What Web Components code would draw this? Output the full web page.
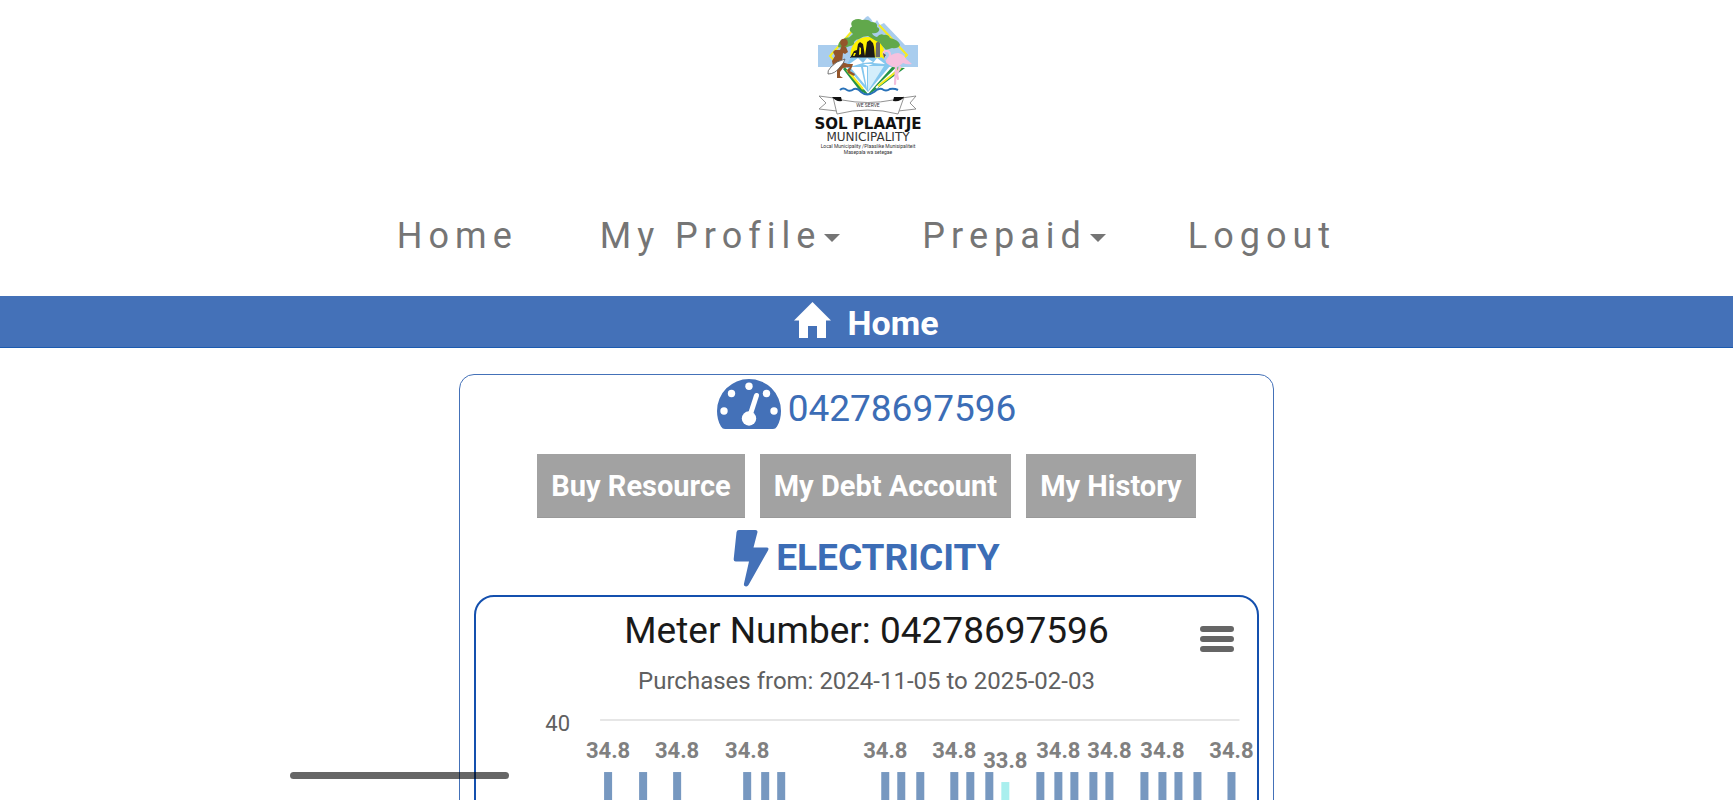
<!DOCTYPE html>
<html lang="en">
<head>
<meta charset="utf-8">
<title>Sol Plaatje Municipality - Home</title>
<style>
  html, body { margin: 0; }
  body { font-family: Roboto, "Liberation Sans", sans-serif; color: #212121; background: #fff; --brand: #4471b8; --brand-dark: #1450ae; }
</style>
</head>
<body>
<portal-page>
  <town-logo slot="logo"></town-logo>
  <site-nav slot="nav">
    <nav-item>Home</nav-item>
    <nav-item menu>My Profile</nav-item>
    <nav-item menu>Prepaid</nav-item>
    <nav-item>Logout</nav-item>
  </site-nav>
  <page-banner slot="banner">Home</page-banner>
  <meter-card number="04278697596">
    <action-button slot="actions">Buy Resource</action-button>
    <action-button slot="actions">My Debt Account</action-button>
    <action-button slot="actions">My History</action-button>
    <usage-chart>
      <span slot="title">Meter Number: 04278697596</span>
      <span slot="subtitle">Purchases from: 2024-11-05 to 2025-02-03</span>
    </usage-chart>
  </meter-card>
</portal-page>
<script>
const define = (name, html, setup) => customElements.define(name, class extends HTMLElement {
  constructor() {
    super();
    this.attachShadow({ mode: 'open' }).innerHTML = html;
  }
  connectedCallback() { if (setup) setup(this, this.shadowRoot); }
});

define('portal-page', `
  <style>
    :host { display: flex; flex-direction: column; height: 100vh; overflow: hidden; }
    header { display: flex; justify-content: center; padding: 10px 0 0; }
    main { flex: 1; min-height: 0; overflow: hidden; padding-top: 26px; }
    .thumb { position: fixed; left: 290px; bottom: 21px; width: 219px; height: 7px; border-radius: 4px; background: rgba(0,0,0,.6); }
  </style>
  <header><slot name="logo"></slot></header>
  <slot name="nav"></slot>
  <slot name="banner"></slot>
  <main><slot></slot></main>
  <div class="thumb"></div>`);

define('town-logo', `
  <style>
    :host { display: block; }
    svg { display: block; width: 134px; height: 150px; }
    text { font-family: Roboto, sans-serif; fill: #333; text-anchor: middle; }
    .name { font-family: "DejaVu Sans", sans-serif; font-weight: bold; fill: #111; }
    .kind { font-family: "DejaVu Sans", sans-serif; }
  </style>
  <svg viewBox="0 0 134 150" role="img" aria-label="Sol Plaatje Municipality">
    <path fill="#a9cdee" d="M18 35H39L66 7 68 6 71 9 74 14 77 10 80 15 84 13 105 35H118V57H18z"/>
    <path fill="none" stroke="#f8ec1c" stroke-width="2" d="M53 20 30 46 41 58M79 15 107 45 92 60"/>
    <circle cx="67.500" cy="44" r="17" fill="#fff200"/>
    <path fill="#61a84b" d="M38 37Q38 31 43 29.500 45 27 49 27.500L53 24 50 21Q49 18 52 16.500 50 13 53 10.500 58 8 62 10 69 9 71 12 78 12 77 17 81 19 78 22 75 24 72 23 73 26 77 27 80 23 84 25 88 24 90 28 99 30 100 35 98 39 92 38L86 40Q82 36 80 33 74 30 68 26 63 26 59 29 56 29 54 32 55 35 50 36 44 39 38 37z"/>
    <path fill="#1b1b16" d="M50 48 54 41 57 40 58 34 60 32 63 34 64 40 65 46 67 32 70 30 73 33 74 37 75 48z"/>
    <path fill="#fff200" d="M59.500 37 61 38 61 44 59 45zM54 43 56 43 54.500 46 53 46z"/>
    <path fill="#696969" d="M76 33 78 31.500 80 33V47H75.500z"/>
    <path fill="#259447" d="M45 57 68 84 92 57 105 58 74 81 68 85 60 81 43 59z"/>
    <path fill="none" stroke="#fff" stroke-width="2" d="M50 59 64 79M97 58 76 78"/>
    <path fill="none" stroke="#f8ec1c" stroke-width="2" d="M47 60 63 79M101 58 78 76"/>
    <path fill="#84c7ee" d="M51 47.500H82L90 56 68 82 46 56z"/>
    <path fill="#fff" d="M58 48 63 53 53 56 48 55zM67 48 73 52 63 53zM77 48 85 54 73 53zM50 57 61 57 65 75zM63 54 73 54 68 56z"/>
    <path fill="#d4eefb" d="M68 56H84L68 81z"/><path fill="#fff" d="M63 57 67 57 67 79z"/>
    <circle cx="44" cy="32.500" r="3.800" fill="#93552b"/>
    <path fill="#93552b" d="M42 35 46 37 48 42 45 44 43 43 42 52 48 54 53 54 52 57 50 61 55 64 54 66 48 63 47 60 50 57 43 58 40 62 40 66 43 68 37 68 37 60 33 56 32 51 35 46 33 42 35 40 40 40z"/>
    <path fill="#fff" stroke="#555" stroke-width=".8" d="M45 49Q36 51 31 57 27 61 28 64 35 64 40 57 44 53 45 49z"/>
    <path fill="none" stroke="#f3bfdc" stroke-width="2.200" stroke-linecap="round" d="M85 46Q82 43 85 41 89 40 90 44 91 47 88 49 85 52 90 54M96 57 95 74M100 57 97 64 98 69"/>
    <path fill="#f5c1de" d="M87 50Q91 43 98 43 104 44 106 49L112 54Q107 55 103 53 98 58 93 57 88 55 87 50z"/>
    <path fill="#555" d="M83 43 84 48 86 45z"/>
    <path fill="none" stroke="#2871b8" stroke-width="2" d="M40 80Q43 77 47 80 50 82 54 79 58 78 61 82 67 87 74 82 78 78 82 79 86 82 90 79 94 78 98 80"/>
    <path fill="#fff" stroke="#777" stroke-width=".8" d="M34 88 19 86 26 93 19 99 37 101V97M102 88 116 86 110 93 116 99 98 101V97"/>
    <path fill="#fff" stroke="#777" stroke-width=".8" d="M33 87Q36 91 42 90 68 95 93 90 99 91 104 87L98 104Q68 96 37 104z"/>
    <path fill="#111" d="M32 87 41 87 42 91Q36 92 32 87zM94 87 104 87Q101 92 93 91z"/>
    <text x="68" y="97" font-size="5">WE SERVE</text>
    <text x="68" y="119" font-size="15" class="name">SOL PLAATJE</text>
    <text x="68" y="131" font-size="12" class="kind">MUNICIPALITY</text>
    <text x="68" y="138" font-size="5">Local Municipality /Plaaslike Munisipaliteit</text>
    <text x="68" y="144" font-size="5">Masepala wa setegae</text>
  </svg>`);

define('site-nav', `
  <style>
    :host { display: block; }
    nav { display: flex; justify-content: center; align-items: center; gap: 82px; height: 136px; box-sizing: border-box; padding-top: 16px; }
  </style>
  <nav><slot></slot></nav>`);

define('nav-item', `
  <style>
    :host { display: block; }
    a, button { display: flex; align-items: center; gap: 3px; font: 36px/48px Roboto, sans-serif; letter-spacing: 6px; color: #757575; text-decoration: none; background: none; border: 0; padding: 0; white-space: nowrap; cursor: pointer; }
    i { width: 0; height: 0; border: 8px solid transparent; border-top-color: #757575; border-bottom: 0; margin-top: 4px; }
  </style>`, (el, root) => {
  if (root.querySelector('slot')) return;
  root.innerHTML += el.hasAttribute('menu')
    ? '<button type="button" aria-haspopup="true"><slot></slot><i></i></button>'
    : '<a href="#"><slot></slot></a>';
});

define('page-banner', `
  <style>
    :host { display: block; }
    h1 { margin: 0; display: flex; justify-content: center; align-items: center; gap: 16px; height: 51px; font: bold 34px/50px Roboto, sans-serif; color: #fff; background: var(--brand); border-bottom: 1px solid #1c5bb0; }
    svg { width: 37px; height: 36px; margin-bottom: 4px; }
    span { padding-top: 2px; }
  </style>
  <h1><svg viewBox="0 0 37 36" aria-hidden="true"><path fill="#fff" d="M18.500 0 37 18.500H32V36H23V24H14V36H5V18.500H0z"/></svg><span><slot></slot></span></h1>`);

define('meter-card', `
  <style>
    :host { display: block; box-sizing: border-box; width: 47%; margin: 0 auto; border: 1px solid #4471b8; border-radius: 15px; padding: 4px 14px 14px; }
    h2, h3 { margin: 0; display: flex; justify-content: center; align-items: center; color: #3c6db6; }
    h2 { gap: 7px; height: 50px; font: 37px/50px Roboto, sans-serif; }
    h2 span { padding-top: 10px; }
    h2 svg { width: 64px; height: 50px; }
    .actions { display: flex; justify-content: center; gap: 15px; padding: 25px 0 11px; }
    h3 { gap: 7px; height: 58px; font: bold 37px/58px Roboto, sans-serif; margin-bottom: 8px; }
    h3 svg { width: 36px; height: 58px; }
  </style>
  <h2>
    <svg viewBox="0 0 64 50" aria-hidden="true">
      <path fill="#4471b8" d="M32 0A32 32 0 0 0 0 32Q0 41 4 47.500 5.500 50 8 50H56Q58.500 50 60 47.500 64 41 64 32A32 32 0 0 0 32 0z"/>
      <g fill="#fff"><circle cx="7" cy="32" r="3.700"/><circle cx="14.500" cy="14.500" r="3.700"/><circle cx="32" cy="7.200" r="3.700"/><circle cx="49.500" cy="14.500" r="3.700"/><circle cx="57" cy="32" r="3.700"/><circle cx="32" cy="39.500" r="7.200"/></g>
      <path stroke="#fff" stroke-width="5" stroke-linecap="round" d="M32.500 38 39.500 16.500"/>
    </svg><span></span>
  </h2>
  <div class="actions"><slot name="actions"></slot></div>
  <h3>
    <svg viewBox="0 0 36 58" aria-hidden="true"><path fill="#4471b8" d="M6 1H22.500Q25 1 24.400 3.500L20.500 18.500H33.500Q36.500 18.500 35 21.500L15.500 56Q14.300 58 12.300 57.200 10.500 56.700 11 54.500L16 32.500H2.700Q.5 32.500 .700 30L3.500 3.200Q3.800 1 6 1z"/></svg><span>ELECTRICITY</span>
  </h3>
  <slot></slot>`, (el, root) => { root.querySelector('h2 span').textContent = el.getAttribute('number'); });

define('action-button', `
  <style>
    :host { display: block; }
    button { display: block; height: 64px; padding: 0 14px; border: 1px solid #999; border-width: 0 0 1px; background: #a2a2a2; color: #fff; font: bold 29px/62px Roboto, sans-serif; white-space: nowrap; cursor: pointer; }
  </style>
  <button type="button"><slot></slot></button>`);

define('usage-chart', `
  <style>
    :host { display: block; position: relative; border: 2px solid var(--brand-dark); border-radius: 20px; text-align: center; }
    .title { font-size: 37px; line-height: 44px; padding-top: 12px; color: #1a1a1a; }
    .sub { font-size: 24px; line-height: 32px; padding-top: 12px; color: #606060; }
    button { position: absolute; top: 22px; right: 16px; width: 48px; height: 40px; padding: 7px; border: 0; background: none; cursor: pointer; }
    button svg, .plot { display: block; width: 100%; }
    .plot text { font-family: Roboto, sans-serif; font-size: 22px; text-anchor: middle; }
    .plot .value { font-weight: bold; fill: #808080; }
    .plot .tick { fill: #606060; text-anchor: end; }
  </style>
  <div class="title"><slot name="title"></slot></div>
  <div class="sub"><slot name="subtitle"></slot></div>
  <button type="button" aria-label="Chart menu"><svg viewBox="0 0 34 26"><path stroke="#666" stroke-width="6" stroke-linecap="round" d="M3 3H31M3 13H31M3 23H31"/></svg></button>
  <svg class="plot" viewBox="0 0 780 480"></svg>`, (el, root) => {
  const bars = [132, 167, 201, 271, 289, 305, 409, 425, 444, 478, 494, 513, 529, 564, 582, 598, 617, 633, 668, 686, 702, 721, 755];
  const labelled = [132, 201, 271, 409, 478, 529, 582, 633, 686, 755];
  const low = 529;
  let out = '<path stroke="#e6e6e6" stroke-width="2" d="M124 23H763"/><text class="tick" x="94" y="34">40</text>';
  for (const x of bars) {
    const y = x === low ? 85 : 75;
    out += `<rect x="${x - 4}" y="${y}" width="8" height="${440 - y}" fill="${x === low ? '#a9efee' : '#7798c0'}"/>`;
  }
  for (const x of labelled) out += `<text class="value" x="${x}" y="${x === low ? 71 : 61}">${x === low ? '33.8' : '34.8'}</text>`;
  root.querySelector('.plot').innerHTML = out;
});
</script>
</body>
</html>
